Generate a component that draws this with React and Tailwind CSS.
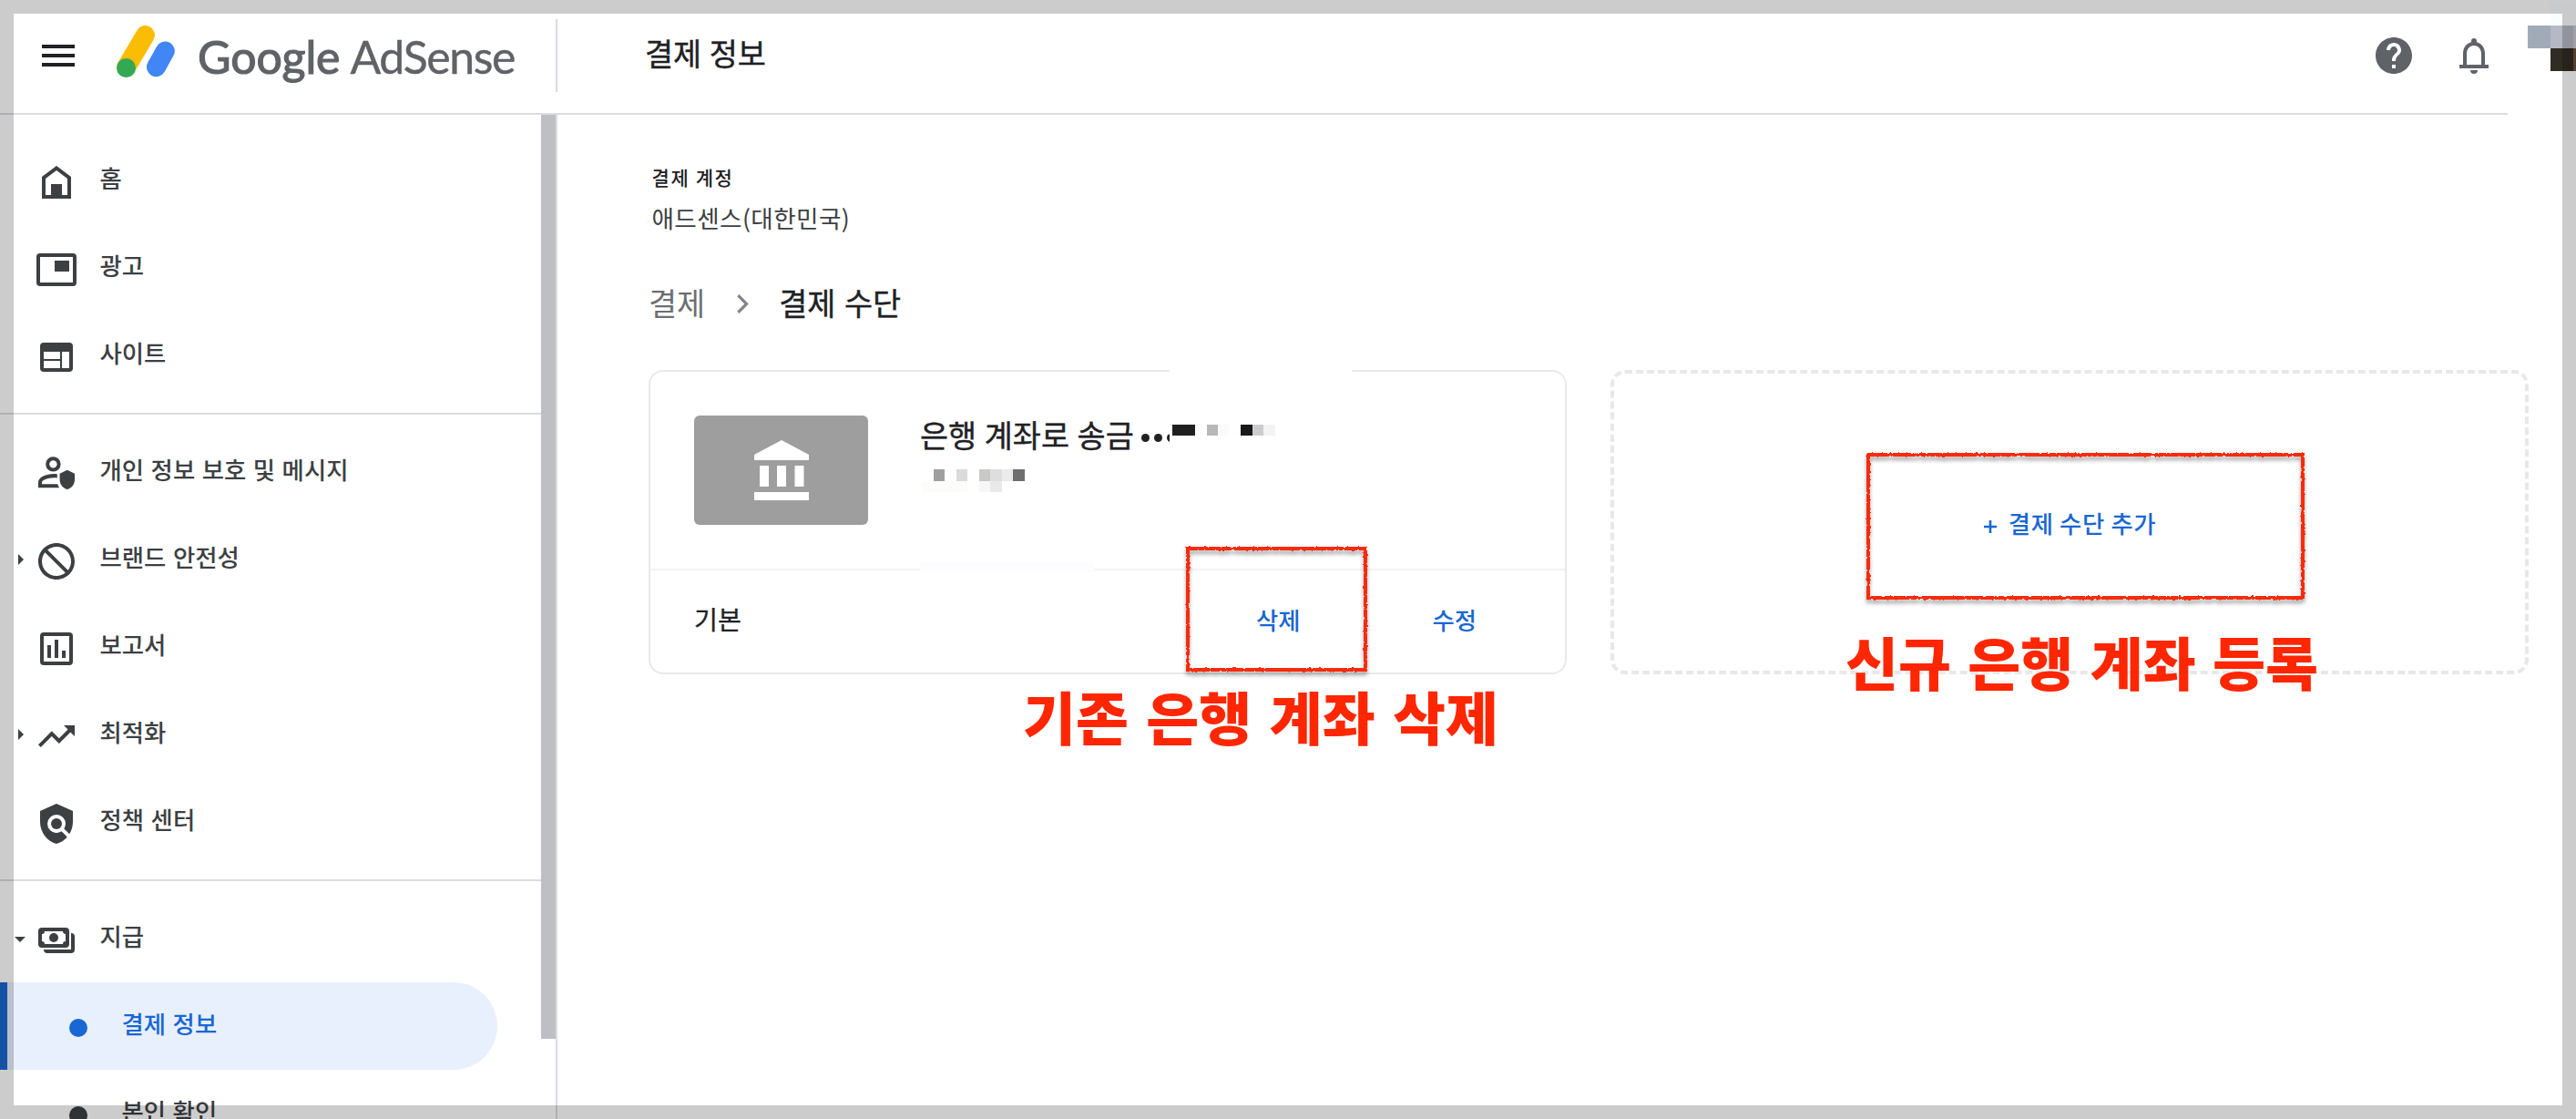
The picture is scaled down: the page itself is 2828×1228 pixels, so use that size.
import React from "react";
import { MdBlock, MdTrendingUp, MdPolicy, MdHelp } from "react-icons/md";

function Icon({ children, className = "" }) {
  return (
    <svg viewBox="0 0 24 24" className={"size-12 shrink-0 " + className} fill="currentColor" fillRule="evenodd">
      {children}
    </svg>
  );
}

const HomeIcon = () => (
  <Icon>
    <path d="M12 3 4 9v12h16V9zM6 19v-9l6-4.5 6 4.5v9h-3v-6H9v6z" />
  </Icon>
);

const AdsIcon = () => (
  <Icon>
    <path d="M3 3h18a2 2 0 0 1 2 2v14a2 2 0 0 1-2 2H3a2 2 0 0 1-2-2V5a2 2 0 0 1 2-2zm0 2v14h18V5zm8 2h8v6h-8z" />
  </Icon>
);

const SitesIcon = () => (
  <Icon>
    <path d="M5 4h14a2 2 0 0 1 2 2v12a2 2 0 0 1-2 2H5a2 2 0 0 1-2-2V6a2 2 0 0 1 2-2zm0 5v4h9V9zm0 5v4h9v-4zm10-5v9h4V9z" />
  </Icon>
);

const PrivacyIcon = () => (
  <Icon>
    <circle cx="10.2" cy="6.7" r="3.1" fill="none" stroke="currentColor" strokeWidth="2" />
    <path d="M12.4 12.1C8 11.4 2 13.2 2 16.6v3h11.6c-.5-.7-.8-1.3-1-2H4v-1c0-1.2 4-2.9 8.4-2.4z" />
    <path d="m17.9 9.9 4.1 2v3.2c0 2.6-1.7 4.8-4.1 5.4-2.4-.6-4.1-2.8-4.1-5.4v-3.2z" />
  </Icon>
);

const ReportsIcon = () => (
  <Icon>
    <path d="M5 3h14a2 2 0 0 1 2 2v14a2 2 0 0 1-2 2H5a2 2 0 0 1-2-2V5a2 2 0 0 1 2-2zm0 2v14h14V5zm2 5h2v7H7zm4-3h2v10h-2zm4 6h2v4h-2z" />
  </Icon>
);

const PaymentsIcon = () => (
  <Icon>
    <path d="M4 5h13a2 2 0 0 1 2 2v7a2 2 0 0 1-2 2H4a2 2 0 0 1-2-2V7a2 2 0 0 1 2-2zm1.5 2A1.5 1.5 0 0 1 4 8.500v4A1.500 1.500 0 0 1 5.500 14h10a1.500 1.500 0 0 1 1.500-1.500v-4A1.500 1.500 0 0 1 15.500 7z" />
    <circle cx="10.500" cy="10.500" r="2.500" />
    <path d="M20 8a2 2 0 0 1 2 2v7a2 2 0 0 1-2 2H7a2 2 0 0 1-2-2h15z" />
  </Icon>
);

const BellIcon = () => (
  <Icon className="text-[#5f6368]">
    <path d="M18 17v-6c0-3.070-1.630-5.640-4.500-6.320V4a1.500 1.500 0 0 0-3 0v.680C7.640 5.360 6 7.920 6 11v6H4v2h16v-2zm-2 0H8v-6c0-2.480 1.510-4.500 4-4.500s4 2.020 4 4.500zM10 20h4a2 2 0 0 1-4 0z" />
  </Icon>
);

function AdSenseLogo() {
  return (
    <svg viewBox="0 0 64 57" className="h-[57px] w-16 shrink-0" fill="none" strokeLinecap="round">
      <path d="M31.500 10.500 10.500 46" stroke="#fbbc04" strokeWidth="21" />
      <path d="M53.300 28 43.500 45.700" stroke="#4285f4" strokeWidth="21" />
      <circle cx="10.500" cy="46.500" r="10.500" fill="#34a853" />
    </svg>
  );
}

function Caret({ dir }) {
  return (
    <span className="flex w-[38px] shrink-0 items-center">
      {dir === "right" && (
        <svg viewBox="0 0 6 12" className="ml-5 h-3 w-1.5" fill="#3c4043">
          <path d="M0 0 6 6 0 12z" />
        </svg>
      )}
      {dir === "down" && (
        <svg viewBox="0 0 12 6" className="mt-0.5 ml-4 h-1.5 w-3" fill="#3c4043">
          <path d="M0 0h12L6 6z" />
        </svg>
      )}
    </span>
  );
}

function NavItem({ icon, label, caret }) {
  return (
    <div className="flex h-24 items-center text-[#3c4043]">
      <Caret dir={caret} />
      <span className="mt-1">{icon}</span>
      <span className="ml-[23.500px] pb-1.5 text-[26.400px] font-medium [word-spacing:1.600px]">{label}</span>
    </div>
  );
}

function SubItem({ label, selected }) {
  return (
    <div
      className={
        selected
          ? "flex h-24 w-[546px] items-center rounded-r-full border-l-8 border-[#1967d2] bg-[#e8f0fe] pl-[68px] text-[#1967d2]"
          : "flex h-24 w-[546px] items-center pl-[76px] text-[#3c4043]"
      }
    >
      <span className="mt-1 size-5 rounded-full bg-current" />
      <span className="ml-[37.500px] pb-1.5 text-[26.400px] font-medium [word-spacing:1.600px]">{label}</span>
    </div>
  );
}

const Rule = () => <div className="my-[15px] h-0.5 w-[594px] bg-[#dadce0]" />;

function Sketched({ w, h, seed, className }) {
  const id = "rough-" + seed;
  return (
    <svg className={"pointer-events-none absolute overflow-visible " + className} width={w} height={h} fill="none">
      <defs>
        <filter id={id} x="-10%" y="-10%" width="120%" height="120%" colorInterpolationFilters="sRGB">
          <feTurbulence type="fractalNoise" baseFrequency="0.35" numOctaves="2" seed={seed} result="n" />
          <feDisplacementMap in="SourceGraphic" in2="n" scale="3" xChannelSelector="R" yChannelSelector="G" result="d" />
          <feDropShadow in="d" dx="0" dy="4" stdDeviation="2" floodColor="#000" floodOpacity="0.350" />
        </filter>
      </defs>
      <rect x="2" y="2" width={w - 4} height={h - 4} stroke="#f92b0c" strokeWidth="4" filter={"url(#" + id + ")"} />
    </svg>
  );
}

function Header() {
  return (
    <header className="flex h-[126px] shrink-0">
      <div className="flex h-[126px] w-[2753px] border-b-2 border-[#dadce0]">
        <div className="mt-[21px] flex h-20 w-[612px] items-start border-r-2 border-[#dadce0]">
          <Icon className="ml-10 mt-4 text-[#202124]">
            <path d="M3 6h18v2H3zm0 5h18v2H3zm0 5h18v2H3z" />
          </Icon>
          <span className="ml-10 mt-[7px]">
            <AdSenseLogo />
          </span>
          <span className="ml-[25px] mt-[11px] whitespace-nowrap font-[Lato] text-[50px] leading-[60px] text-[#5f6368]">
            <span className="tracking-[-0.100px] [-webkit-text-stroke:1.200px_#5f6368]">Google</span>
            <span className="ml-[11px] tracking-[-1.400px] [-webkit-text-stroke:0.400px_#5f6368]">AdSense</span>
          </span>
        </div>
        <h1 className="ml-24 mt-[34px] text-[33.800px] leading-[48px] text-[#202124] [-webkit-text-stroke:0.400px_#202124] [word-spacing:1px]">
          결제 정보
        </h1>
        <div className="ml-auto mr-[13px] mt-[37px] flex gap-10">
          <MdHelp className="size-12 text-[#5f6368]" />
          <BellIcon />
        </div>
      </div>
      <div className="ml-[22px] mt-[3px] grid h-[75px] w-[53px] grid-cols-[25px_25px_3px] grid-rows-3">
        <span />
        <span className="bg-[#fafdff]" />
        <span className="bg-[#fafdff]" />
        <span className="bg-[#a1abb7]" />
        <span className="bg-[#b5b9c5]" />
        <span className="bg-[#c8cad8]" />
        <span />
        <span className="bg-[#312c23]" />
        <span className="bg-[#6a4f3d]" />
      </div>
    </header>
  );
}

function Sidebar() {
  return (
    <aside className="flex w-[612px] shrink-0 justify-between overflow-hidden border-r-2 border-[#dadce0]">
      <nav className="w-[594px] pt-6">
        <NavItem icon={<HomeIcon />} label="홈" />
        <NavItem icon={<AdsIcon />} label="광고" />
        <NavItem icon={<SitesIcon />} label="사이트" />
        <Rule />
        <NavItem icon={<PrivacyIcon />} label="개인 정보 보호 및 메시지" />
        <NavItem icon={<MdBlock className="size-12 -scale-x-100" />} label="브랜드 안전성" caret="right" />
        <NavItem icon={<ReportsIcon />} label="보고서" />
        <NavItem icon={<MdTrendingUp className="size-12" />} label="최적화" caret="right" />
        <NavItem icon={<MdPolicy className="size-12" />} label="정책 센터" />
        <Rule />
        <NavItem icon={<PaymentsIcon />} label="지급" caret="down" />
        <SubItem label="결제 정보" selected />
        <SubItem label="본인 확인" />
      </nav>
      <div className="h-[1014px] w-4 bg-[#bdbfc5]" />
    </aside>
  );
}

function BankCard() {
  return (
    <section className="relative h-[334px] w-[1008px] rounded-2xl border-2 border-[#e8eaea]">
      <div className="flex h-[216px] pl-12 pt-12">
        <div className="flex h-[120px] w-[191px] items-center justify-center rounded-md bg-[#9e9e9e]">
          <svg viewBox="0 0 60 66" className="mb-[1px] h-[66px] w-[60px]" fill="#fff">
            <path d="M30 0 60 16v6H0v-6zM6 28h10v23H6zM25 28h10v23H25zM44.500 28h10v23h-10zM0 57h60v9H0z" />
          </svg>
        </div>
        <div className="ml-[57px]">
          <div className="flex">
            <span className="whitespace-nowrap text-[33.800px] leading-[42px] text-[#202124] [-webkit-text-stroke:0.400px_#202124] [word-spacing:1px]">
              은행 계좌로 송금
            </span>
            <span className="ml-[8px] mt-5 flex h-[9px] w-[31px] gap-[5px] overflow-hidden">
              <i className="size-[9px] shrink-0 rounded-full bg-[#202124]" />
              <i className="size-[9px] shrink-0 rounded-full bg-[#202124]" />
              <i className="size-[9px] shrink-0 rounded-full bg-[#202124]" />
            </span>
            <span className="ml-[3px] mt-[10px] flex h-3">
              <i className="w-[25px] bg-[#1f1f20]" />
              <i className="ml-[13px] w-3 bg-[#b8b8b8]" />
              <i className="w-3 bg-[#fafafa]" />
              <i className="ml-[13px] w-[13px] bg-[#18181c]" />
              <i className="w-3 bg-[#cbcccd]" />
              <i className="w-[13px] bg-[#f3f3f4]" />
            </span>
          </div>
          <div className="ml-[2px] mt-[17px] grid w-[113px] grid-cols-9 grid-rows-[13px_12px]">
            <i />
            <i className="bg-[#9f9f9f]" />
            <i />
            <i className="bg-[#dadada]" />
            <i />
            <i className="bg-[#c9c9c8]" />
            <i className="bg-[#dedede]" />
            <i className="bg-[#ebebeb]" />
            <i className="bg-[#6f6f6f]" />
            <i className="bg-[#fcfcfb]" />
            <i className="bg-[#fcfcfb]" />
            <i className="bg-[#fcfcfb]" />
            <i className="bg-[#fcfcfb]" />
            <i />
            <i className="bg-[#f7f7f7]" />
            <i className="bg-[#e9e9e9]" />
          </div>
        </div>
      </div>
      <div className="flex h-[114px] items-center border-t-2 border-[#f1f3f4] pb-[5px] pl-12">
        <span className="text-[28.200px] text-[#202124] [-webkit-text-stroke:0.300px_#202124]">기본</span>
        <span className="ml-auto text-[26.400px] font-medium text-[#1967d2]">삭제</span>
        <span className="ml-[145px] mr-[97px] text-[26.400px] font-medium text-[#1967d2]">수정</span>
      </div>
      <div className="absolute -top-0.5 left-[570px] h-0.5 w-[200px] bg-white" />
      <div className="absolute left-[296px] top-[208px] h-3 w-[191px] bg-[#fdfdff]" />
      <Sketched w={199} h={137} seed={4} className="left-[588px] top-[192px]" />
      <p className="absolute left-[409px] top-[335px] whitespace-nowrap text-[63px] font-black leading-[84px] text-[#ff2600] [word-spacing:5px]">
        기존 은행 계좌 삭제
      </p>
    </section>
  );
}

function AddCard() {
  return (
    <section className="relative flex h-[334px] w-[1008px] items-center justify-center rounded-2xl border-4 border-dashed border-[#e8e8ea]">
      <button className="flex items-center pl-[1px] pt-0.5 text-[26.400px] font-medium tracking-[0.600px] text-[#1967d2]">
        <svg viewBox="0 0 14 14" className="mr-[13px] mt-2 size-[14px]" stroke="currentColor" strokeWidth="2.600">
          <path d="M7 0v14M0 7h14" />
        </svg>
        <span>결제 수단 추가</span>
      </button>
      <Sketched w={481} h={161} seed={9} className="left-[277px] top-[87px]" />
      <p className="absolute left-[254px] top-[273px] whitespace-nowrap text-[63px] font-black leading-[84px] text-[#ff2600] [word-spacing:4px]">
        신규 은행 계좌 등록
      </p>
    </section>
  );
}

export default function App() {
  return (
    <div className="relative flex h-[1228px] w-[2828px] flex-col overflow-hidden bg-white font-['Noto_Sans_CJK_KR',sans-serif]">
      <Header />
      <div className="flex min-h-0 flex-1">
        <Sidebar />
        <main className="flex-1 pl-[100px] pt-[50px]">
          <div className="ml-[3.500px] mt-[2px] text-[21px] font-medium leading-8 tracking-[1.600px] text-[#202124]">결제 계정</div>
          <div className="ml-[3.500px] mt-[9px] text-[26.600px] leading-10 tracking-[0.400px] text-[#3c4043]">애드센스(대한민국)</div>
          <div className="mt-[49px] flex items-center text-[33.800px] leading-[48px]">
            <span className="text-[#6b6f73]">결제</span>
            <svg viewBox="0 0 13 21" className="ml-[35px] mt-[2px] h-[21px] w-[13px]" fill="none" stroke="#80868b" strokeWidth="3.200">
              <path d="m1.300 1.200 9.300 9.300-9.300 9.300" />
            </svg>
            <span className="ml-[33px] text-[#202124] [-webkit-text-stroke:0.400px_#202124] [word-spacing:2px]">결제 수단</span>
          </div>
          <div className="mt-[50px] flex gap-12">
            <BankCard />
            <AddCard />
          </div>
        </main>
      </div>
      <div className="pointer-events-none absolute inset-0 border-[15px] border-black/20" />
    </div>
  );
}
